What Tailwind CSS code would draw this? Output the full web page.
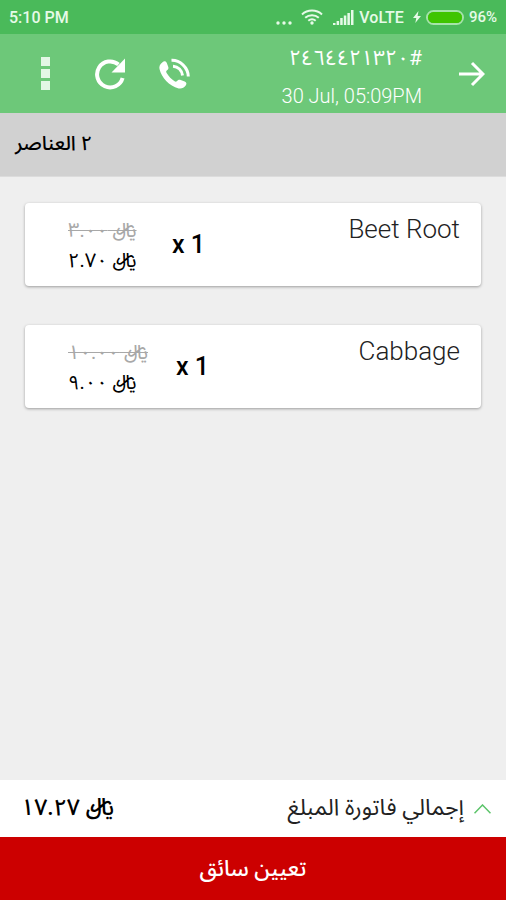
<!DOCTYPE html>
<html lang="ar" dir="rtl">
<head>
  <meta charset="UTF-8">
  <meta name="viewport" content="width=device-width, initial-scale=1">
  <title>Order details</title>
  <!-- Load Tailwind -->
  <script src="https://cdn.jsdelivr.net/npm/@tailwindcss/browser@4"></script>
</head>
<body class="flex min-h-screen flex-col bg-[#efefef] font-[Roboto,'Noto_Sans_Arabic','DejaVu_Sans',sans-serif] text-black">

  <!-- Status bar -->
  <div dir="ltr" class="flex h-[34px] items-center justify-between bg-[#4aba5a] px-[9px] text-[#e6fae8]">
    <span class="pt-px text-base font-medium">5:10 PM</span>
    <div class="flex items-center">
      <svg class="mt-3 h-1 w-[18px]" viewBox="0 0 18 4" fill="currentColor">
        <circle cx="3" cy="2" r="1.7"/><circle cx="9" cy="2" r="1.7"/><circle cx="15" cy="2" r="1.7"/>
      </svg>
      <svg class="ml-2 h-4 w-[22px]" viewBox="0 0 22 16" fill="none" stroke="currentColor" stroke-width="2">
        <path d="M1 5.5C6.500 .3 15.500 .3 21 5.500M4.200 8.700C8 5.300 14 5.300 17.800 8.700M7.300 11.800C9.500 9.900 12.500 9.900 14.700 11.800"/>
        <circle cx="11" cy="14" r="1.700" fill="currentColor" stroke="none"/>
      </svg>
      <svg class="ml-[10px] h-[15px] w-[21px]" viewBox="0 0 21 15" fill="currentColor">
        <path d="M0 13h2.500v2H0zM3.600 11h2.500v4H3.600zM7.200 8h2.500v7H7.200zM10.800 5.500h2.500V15h-2.500zM14.400 3h2.500v12h-2.500zM18 0h2.500v15H18z"/>
      </svg>
      <span class="ml-[5px] pt-px text-base font-medium">VoLTE</span>
      <svg class="ml-[9px] h-3 w-2" viewBox="0 0 8 12" fill="currentColor"><path d="M5.500 0 0 7h3.300L2.300 12 8 5H4.600z"/></svg>
      <span class="ml-[5px] h-[15px] w-[38px] rounded-full border-2 border-[#a5e3a9]">
        <span class="block h-full rounded-full bg-[#3fc400]"></span>
      </span>
      <span class="ml-[5px] pt-px text-[15px] font-medium">96%</span>
    </div>
  </div>

  <!-- Toolbar -->
  <header class="flex h-[79px] items-center bg-[#6dc879] pr-[21px] pl-[41px] text-white">
    <button aria-label="Back">
      <svg class="h-[26px] w-[26px]" viewBox="0 0 26 26" fill="none" stroke="currentColor" stroke-width="3"><path d="M0 13h24M13 2l11 11-11 11"/></svg>
    </button>
    <div class="mr-[37px] flex-1 pt-1">
      <h1 class="text-[21px] leading-8">#٢٤٦٤٤٢١٣٢٠</h1>
      <p dir="ltr" class="mt-2 text-right text-xl leading-7 font-light">30 Jul, 05:09PM</p>
    </div>
    <div class="flex items-center">
      <button aria-label="Call">
        <svg class="h-[32px] w-[32px]" viewBox="0 0 32 32" fill="none" stroke="currentColor">
          <path fill="currentColor" stroke="none" d="M4.500 4.200C6 2.700 8 3 8.800 5l1.500 4c.5 1.500-.2 2.600-1.500 3.500-1 .7-.6 1.800 0 2.800 2 3.300 4.500 5.900 7.800 8 .9.600 1.700.6 2.400-.2 1.300-1.500 2.300-1.700 3.700-1.200l4 1.700c2 .8 2.200 2.500 1 4-1.700 2.300-4.200 3.400-7 2.800C11 28 3.500 19.500 1.500 11 .9 8.400 2 6 4.500 4.200z"/>
          <path stroke-width="3" d="M13.500 2.300C22 2 30 9.500 30.300 18.500M15 8.200c5.200.2 9 4.200 9.500 9.300"/>
        </svg>
      </button>
      <button aria-label="Refresh" class="mr-8">
        <svg class="h-[32px] w-[32px]" viewBox="0 0 32 32">
          <path d="M24.500 6.500A13 13 0 1 0 28.600 20" fill="none" stroke="currentColor" stroke-width="4"/>
          <path d="M31 .5V14.500H17.500z" fill="currentColor"/>
        </svg>
      </button>
      <button aria-label="More" class="mr-[44px] flex flex-col gap-[3px] text-[#e3f7e5]">
        <span class="size-[9px] bg-current"></span>
        <span class="size-[9px] bg-current"></span>
        <span class="size-[9px] bg-current"></span>
      </button>
    </div>
  </header>

  <!-- Item count -->
  <div class="flex h-16 items-center justify-end border-b border-[#dcdcdc] bg-[#d1d1d1] px-[15px] pb-1">
    <h2 class="text-xl font-medium">٢ العناصر</h2>
  </div>

  <!-- Items -->
  <main class="flex flex-1 flex-col gap-[39px] px-[25px] pt-[26px]">
    <article class="flex h-[83px] items-center rounded-sm bg-white pr-[21px] pl-[43px] shadow-[0_1px_3px_rgba(0,0,0,0.35)]">
      <h3 dir="ltr" class="mt-[10px] flex-1 self-start text-right text-[26px] leading-8 font-light text-[#222]">Beet Root</h3>
      <p dir="ltr" class="w-9 text-left text-[25px] font-medium whitespace-nowrap">x 1</p>
      <div class="mr-[35px] flex w-[69px] flex-col items-end text-xl leading-[30px] whitespace-nowrap">
        <del class="text-[#a8a8a8] decoration-1">﷼ ٣.٠٠</del>
        <span>﷼ ٢.٧٠</span>
      </div>
    </article>

    <article class="flex h-[83px] items-center rounded-sm bg-white pr-[21px] pl-[43px] shadow-[0_1px_3px_rgba(0,0,0,0.35)]">
      <h3 dir="ltr" class="mt-[10px] flex-1 self-start text-right text-[26px] leading-8 font-light text-[#222]">Cabbage</h3>
      <p dir="ltr" class="w-9 text-left text-[25px] font-medium whitespace-nowrap">x 1</p>
      <div class="mr-[35px] flex w-[73px] flex-col items-end text-xl leading-[30px] whitespace-nowrap">
        <del class="text-[#a8a8a8] decoration-1">﷼ ١٠.٠٠</del>
        <span>﷼ ٩.٠٠</span>
      </div>
    </article>
  </main>

  <!-- Bill total -->
  <footer>
    <div class="flex h-[57px] items-center bg-white pr-[15px] pl-[21px]">
      <button class="flex items-center gap-[10px] text-[23px] text-[#222]">
        <svg class="h-[10px] w-[17px]" viewBox="0 0 17 10" fill="none" stroke="#5cc46a" stroke-width="1.500"><path d="M.5 9.300 8.500 1l8 8.300"/></svg>
        <span>إجمالي فاتورة المبلغ</span>
      </button>
      <strong class="mr-auto text-[23px] font-medium">﷼ ١٧.٢٧</strong>
    </div>
    <button class="h-[63px] w-full bg-[#cc0000] text-[22px] font-medium text-white">تعيين سائق</button>
  </footer>
</body>
</html>
